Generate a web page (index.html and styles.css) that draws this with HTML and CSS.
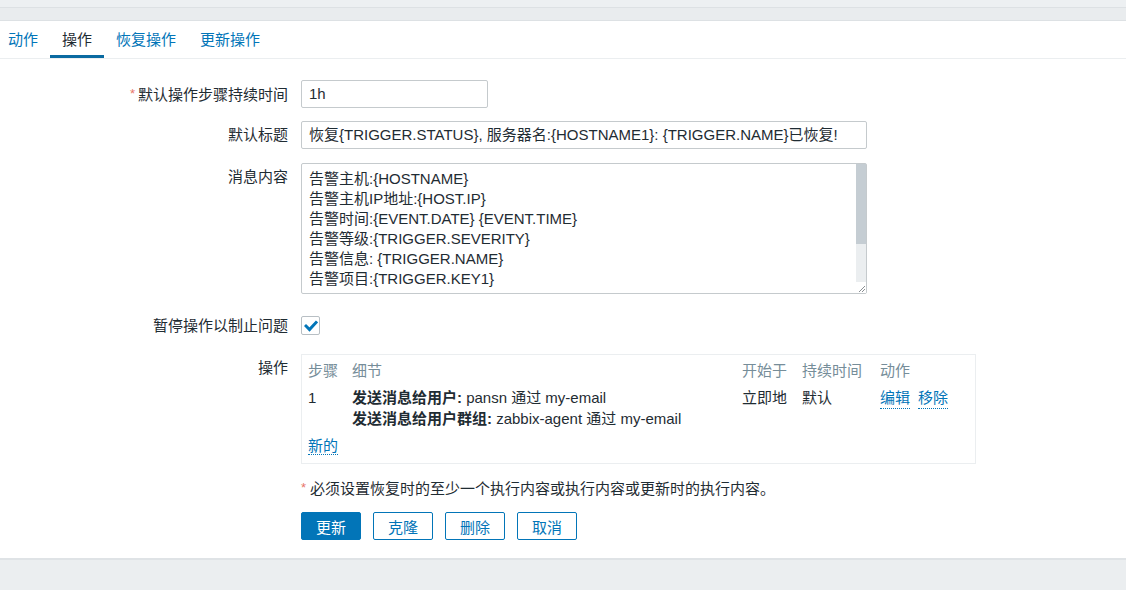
FILE: index.html
```html
<!DOCTYPE html>
<html lang="zh">
<head>
<meta charset="utf-8">
<title>操作</title>
<link rel="stylesheet" href="styles.css">
</head>
<body>
<div class="band-top"></div>
<div class="band-mid"></div>
<div class="card">
  <div class="tabs">
    <a class="tab">动作</a>
    <a class="tab active">操作</a>
    <a class="tab">恢复操作</a>
    <a class="tab">更新操作</a>
  </div>
  <div class="form">
    <div class="row row-input">
      <div class="label"><span class="req">*</span>默认操作步骤持续时间</div>
      <div class="field"><div class="input short">1h</div></div>
    </div>
    <div class="row row-input row-title">
      <div class="label">默认标题</div>
      <div class="field"><div class="input wide">恢复{TRIGGER.STATUS}, 服务器名:{HOSTNAME1}: {TRIGGER.NAME}已恢复!</div></div>
    </div>
    <div class="row row-text">
      <div class="label label-top">消息内容</div>
      <div class="field">
        <div class="textarea">
          <div class="ta-content">
            <div>告警主机:{HOSTNAME}</div>
            <div>告警主机IP地址:{HOST.IP}</div>
            <div>告警时间:{EVENT.DATE} {EVENT.TIME}</div>
            <div>告警等级:{TRIGGER.SEVERITY}</div>
            <div>告警信息: {TRIGGER.NAME}</div>
            <div>告警项目:{TRIGGER.KEY1}</div>
          </div>
          <div class="scrollbar">
            <div class="thumb"></div>
            <div class="track"></div>
            <div class="corner">
              <svg width="10" height="10" viewBox="0 0 10 10"><path d="M9 3 L3 9 M9 6 L6 9" stroke="#8a8f93" stroke-width="1" fill="none"/></svg>
            </div>
          </div>
        </div>
      </div>
    </div>
    <div class="row row-check">
      <div class="label">暂停操作以制止问题</div>
      <div class="field">
        <div class="checkbox">
          <svg width="14" height="12" viewBox="0 0 14 12"><path d="M2 6 L5.5 9.5 L12 2.5" stroke="#0275b8" stroke-width="3" fill="none" stroke-linecap="square"/></svg>
        </div>
      </div>
    </div>
    <div class="row row-ops">
      <div class="label label-top">操作</div>
      <div class="field">
        <div class="ops">
          <div class="ops-grid">
            <div class="th">步骤</div>
            <div class="th">细节</div>
            <div class="th">开始于</div>
            <div class="th">持续时间</div>
            <div class="th">动作</div>
            <div class="td">1</div>
            <div class="td"><b>发送消息给用户:</b> pansn 通过 my-email<br><b>发送消息给用户群组:</b> zabbix-agent 通过 my-email</div>
            <div class="td">立即地</div>
            <div class="td">默认</div>
            <div class="td actions"><a class="link">编辑</a><a class="link">移除</a></div>
          </div>
          <div class="ops-new"><a class="link">新的</a></div>
        </div>
      </div>
    </div>
    <div class="row row-note">
      <div class="label"></div>
      <div class="field note"><span class="req">*</span>必须设置恢复时的至少一个执行内容或执行内容或更新时的执行内容。</div>
    </div>
    <div class="row row-buttons">
      <div class="label"></div>
      <div class="field buttons">
        <button class="btn primary">更新</button>
        <button class="btn">克隆</button>
        <button class="btn">删除</button>
        <button class="btn">取消</button>
      </div>
    </div>
  </div>
</div>
<div class="band-bottom"></div>
</body>
</html>
```

FILE: styles.css
```css
html, body {
  margin: 0;
  padding: 0;
  background: #ebeef0;
}
body {
  font-family: "Liberation Sans", Arial, "Noto Sans CJK SC", sans-serif;
  font-size: 15px;
  color: #1f2c33;
}
.band-top {
  height: 7px;
  background: #edf0f2;
  border-bottom: 1px solid #dde1e4;
}
.band-mid {
  height: 12px;
  background: #e9ecee;
  border-bottom: 1px solid #dde1e4;
}
.card {
  background: #ffffff;
  border-bottom: 2px solid #dfe3e6;
  padding-bottom: 18px;
}
.tabs {
  display: flex;
  height: 37px;
  border-bottom: 1px solid #ebeef0;
}
.tab {
  display: block;
  padding: 0 12px;
  line-height: 37px;
  color: #0275b8;
  border-bottom: 3px solid transparent;
  height: 34px;
}
.tab:first-child {
  padding-left: 8px;
}
.tab.active {
  color: #1f2c33;
  border-bottom-color: #0a6aa1;
}
.form {
  padding-top: 21px;
}
.row {
  display: flex;
}
.label {
  width: 288px;
  flex: none;
  text-align: right;
  padding-right: 13px;
  box-sizing: content-box;
}
.req {
  color: #e8766a;
  margin-right: 3px;
  font-size: 13px;
  vertical-align: 2px;
}
.field {
  flex: none;
}
.row-input {
  height: 28px;
  line-height: 28px;
  margin-bottom: 13px;
}
.row-title {
  margin-bottom: 14px;
}
.input {
  box-sizing: border-box;
  height: 28px;
  border: 1px solid #c5cacd;
  border-radius: 2px;
  padding: 0 7px;
  line-height: 26px;
  white-space: nowrap;
  overflow: hidden;
}
.input.short {
  width: 187px;
}
.input.wide {
  width: 566px;
}
.row-text {
  margin-bottom: 22px;
}
.label-top {
  padding-top: 4px;
  line-height: 20px;
}
.textarea {
  box-sizing: border-box;
  width: 566px;
  height: 131px;
  border: 1px solid #c5cacd;
  border-radius: 2px;
  display: flex;
}
.ta-content {
  flex: 1;
  padding: 5px 7px;
  line-height: 20px;
  overflow: hidden;
}
.scrollbar {
  width: 10px;
  display: flex;
  flex-direction: column;
}
.thumb {
  height: 80px;
  background: #c5cdd3;
}
.track {
  flex: 1;
  background: #ebeef0;
}
.corner {
  height: 11px;
  background: #ffffff;
  display: flex;
  align-items: flex-end;
  justify-content: flex-end;
}
.row-check {
  height: 19px;
  line-height: 19px;
  margin-bottom: 19px;
}
.checkbox {
  box-sizing: border-box;
  width: 19px;
  height: 19px;
  border: 1px solid #b8bfc4;
  border-radius: 2px;
  display: flex;
  align-items: center;
  justify-content: center;
}
.ops {
  box-sizing: border-box;
  width: 675px;
  height: 110px;
  border: 1px solid #ebeef0;
  padding: 6px 7px 7px 6px;
}
.ops-grid {
  display: grid;
  grid-template-columns: 44px 390px 60px 78px 1fr;
}
.th {
  color: #768d99;
  line-height: 20px;
  margin-bottom: 6px;
}
.td {
  line-height: 21px;
  white-space: nowrap;
}
.td b {
  font-weight: bold;
}
.actions {
  display: flex;
  align-items: flex-start;
  gap: 8px;
}
.link {
  color: #0275b8;
  border-bottom: 1px dotted #0275b8;
  text-decoration: none;
}
.ops-new {
  margin-top: 6px;
  line-height: 21px;
}
.row-note {
  margin-top: 14px;
  line-height: 20px;
}
.note .req {
  margin-right: 4px;
}
.row-buttons {
  margin-top: 13px;
}
.buttons {
  display: flex;
  gap: 12px;
}
.btn {
  box-sizing: border-box;
  height: 28px;
  width: 60px;
  border: 1px solid #0275b8;
  border-radius: 2px;
  background: #ffffff;
  color: #0275b8;
  font-family: "Liberation Sans", Arial, "Noto Sans CJK SC", sans-serif;
  font-size: 15px;
  padding: 0;
}
.btn.primary {
  background: #0275b8;
  color: #ffffff;
}
.band-bottom {
  height: 40px;
  background: #ebeef0;
}
```
